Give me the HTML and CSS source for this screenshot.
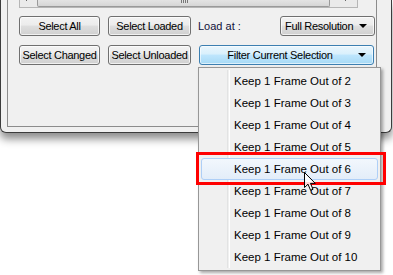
FILE: index.html
```html
<html>
<head>
	<link rel="stylesheet" href="styles.css">
</head>
<body>
	<div class="window">
		<div class="panel">
			<div class="hscroll">
				<div class="sb-btn"><span class="sb-left"></span></div>
				<div class="thumb"><span class="grip"></span></div>
				<div class="sb-btn sb-end"><span class="sb-right"></span></div>
			</div>
			<div class="row">
				<button class="btn col1">Select All</button>
				<button class="btn col2">Select Loaded</button>
				<span class="label">Load at :</span>
				<button class="btn combo">Full Resolution<span class="tri"></span></button>
			</div>
			<div class="row">
				<button class="btn col1">Select Changed</button>
				<button class="btn col2">Select Unloaded</button>
				<button class="btn filter">Filter Current Selection<span class="tri"></span></button>
			</div>
		</div>
	</div>

	<div class="menu">
		<div class="gutter"></div>
		<div class="item">Keep 1 Frame Out of 2</div>
		<div class="item">Keep 1 Frame Out of 3</div>
		<div class="item">Keep 1 Frame Out of 4</div>
		<div class="item">Keep 1 Frame Out of 5</div>
		<div class="item hot">Keep 1 Frame Out of 6</div>
		<div class="item">Keep 1 Frame Out of 7</div>
		<div class="item">Keep 1 Frame Out of 8</div>
		<div class="item">Keep 1 Frame Out of 9</div>
		<div class="item">Keep 1 Frame Out of 10</div>
	</div>

	<div class="callout"></div>

	<svg class="cursor" width="13" height="20" viewBox="0 0 13 20">
		<path d="M0.5 0.5 L0.5 15.5 L4 12.2 L6.6 18.3 L9 17.3 L6.5 11.4 L11.3 11.4 Z" fill="#fff" fill-opacity="0.85" stroke="#000" stroke-width="1" stroke-linejoin="miter"/>
	</svg>
</body>
</html>
```

FILE: styles.css
```css
body{
	margin:0;
	background:#fff;
	font-family:"Liberation Sans", Arial, sans-serif;
	font-size:11px;
	color:#000;
	position:relative;
	height:275px;
	overflow:hidden;
}

.window{
	width:392px;
	height:133px;
	box-sizing:border-box;
	border:1px solid #3c3c3c;
	border-top:none;
	border-radius:0 0 6px 6px;
	background:#f0f0f0;
	padding:0 14px 5px 6px;
	box-shadow:0 6px 9px rgba(0,0,0,0.45);
}

.panel{
	height:127px;
	box-sizing:border-box;
	border:1px solid #8c8c8c;
	border-top:none;
	padding:0 0 0 11px;
	background:#f0f0f0;
}

.hscroll{
	width:339px;
	height:8px;
	box-sizing:border-box;
	border:1px solid #b6b6b6;
	border-top:none;
	background:#eaeaea;
	display:flex;
}
.sb-btn{
	width:17px;
	position:relative;
}
.sb-end{
	width:24px;
	margin-left:auto;
}
.sb-left, .sb-right{
	position:absolute;
	top:-2px;
	width:1px;
	height:3px;
	background:#666;
}
.sb-left{ left:6px; }
.sb-right{ left:12px; }
.thumb{
	width:293px;
	box-sizing:border-box;
	border:1px solid #9a9a9a;
	border-top:none;
	border-radius:0 0 2px 2px;
	background:linear-gradient(#e4e4e4, #d6d6d6);
	position:relative;
}
.grip{
	position:absolute;
	left:143px;
	top:0;
	width:7px;
	height:3px;
	background:repeating-linear-gradient(90deg, #777 0 1px, transparent 1px 2px);
}

.row{
	display:flex;
	align-items:center;
	margin-top:8px;
}
.row + .row{
	margin-top:9px;
}

.btn{
	height:20px;
	box-sizing:border-box;
	border:1px solid #707070;
	border-radius:3px;
	background:linear-gradient(#f3f3f3 0%, #ececec 45%, #dedede 50%, #d0d0d0 100%);
	box-shadow:inset 0 0 0 1px rgba(255,255,255,0.7);
	font:inherit;
	letter-spacing:-0.3px;
	color:#000;
	padding:0;
	display:flex;
	align-items:center;
	justify-content:center;
	white-space:nowrap;
}
.col1{
	width:81px;
}
.col2{
	width:83px;
	margin-left:8px;
}
.label{
	margin-left:7px;
	color:#10103a;
	flex:1;
}
.combo{
	width:95px;
	margin-right:1px;
	justify-content:flex-start;
	padding-left:4px;
}
.filter{
	width:175px;
	margin-left:8px;
	padding-right:13px;
	border-color:#3c7fb1;
	background:linear-gradient(#eaf6fd 0%, #d9f0fc 45%, #bee6fd 50%, #a7d9f5 100%);
	box-shadow:inset 0 0 0 1px rgba(255,255,255,0.6);
}
.tri{
	position:absolute;
	right:7px;
	top:7px;
	width:0;
	height:0;
	border-left:4px solid transparent;
	border-right:4px solid transparent;
	border-top:4px solid #000;
}
.combo, .filter{
	position:relative;
}

.menu{
	position:absolute;
	left:198px;
	top:67px;
	width:183px;
	box-sizing:border-box;
	border:1px solid #979797;
	background:#f0f0f0;
	padding:2px;
	box-shadow:2px 2px 3px rgba(0,0,0,0.35);
}
.gutter{
	position:absolute;
	left:28px;
	top:2px;
	bottom:2px;
	width:1px;
	border-left:1px solid #e2e3e3;
	border-right:1px solid #fff;
}
.item{
	position:relative;
	height:22px;
	line-height:22px;
	padding-left:33px;
	white-space:nowrap;
	font-size:11.5px;
}
.hot{
	box-sizing:border-box;
	line-height:20px;
	border:1px solid #aecff7;
	border-radius:3px;
	background:linear-gradient(#f2f7fd, #e3edf9);
	padding-left:32px;
}

.callout{
	position:absolute;
	left:196px;
	top:152px;
	width:190px;
	height:33px;
	box-sizing:border-box;
	border:3px solid #f00;
}

.cursor{
	position:absolute;
	left:304px;
	top:172px;
}
```
